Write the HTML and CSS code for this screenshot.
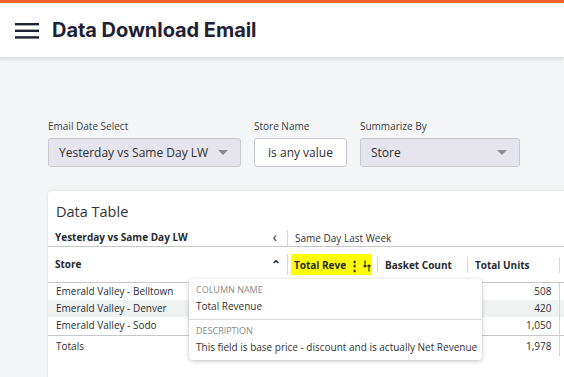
FILE: index.html
```html
<!DOCTYPE html>
<html>
<head>
	<title>Data Download Email</title>
	<meta name="viewport" content="width=device-width, initial-scale=1">
	<link rel="stylesheet" href="styles.css">
</head>

<body>
	<div class="topbar"></div>
	<header class="appbar">
		<svg class="menu" width="24" height="16" viewBox="0 0 24 16">
			<rect x="0" y="0" width="24" height="2.4" fill="#1e2235"/>
			<rect x="0" y="6.6" width="24" height="2.4" fill="#1e2235"/>
			<rect x="0" y="13.2" width="24" height="2.4" fill="#1e2235"/>
		</svg>
		<h1>Data Download Email</h1>
	</header>

	<main class="page">
		<!-- Filters -->
		<div class="filters">
			<div class="filter">
				<label>Email Date Select</label>
				<div class="select date">Yesterday vs Same Day LW <span class="caret"></span></div>
			</div>
			<div class="filter">
				<label>Store Name</label>
				<div class="input">is any value</div>
			</div>
			<div class="filter">
				<label>Summarize By</label>
				<div class="select summary">Store <span class="caret"></span></div>
			</div>
		</div>

		<!-- Data table card -->
		<div class="card">
			<h2>Data Table</h2>
			<table class="grid">
				<colgroup>
					<col style="width:239px">
					<col style="width:90px">
					<col style="width:90px">
					<col style="width:92px">
					<col style="width:100px">
				</colgroup>
				<tr class="group">
					<th><div class="split"><span>Yesterday vs Same Day LW</span><span class="chev">&lsaquo;</span></div></th>
					<th colspan="4"><div class="sep light">Same Day Last Week</div></th>
				</tr>
				<tr class="head">
					<th><div class="split"><span>Store</span><span class="up">&#8963;</span></div></th>
					<th><div class="sep"><div class="hl">
						<span>Total Reve</span>
						<span class="dots">&#8942;</span>
						<svg class="sort" width="8" height="12" viewBox="0 0 8 12">
							<path d="M2 0.5 V7 M0.5 5.5 L2 7 L3.5 5.5" stroke="#222" stroke-width="1.1" fill="none"/>
							<path d="M6 11.5 V5 M4.5 6.5 L6 5 L7.5 6.5" stroke="#222" stroke-width="1.1" fill="none"/>
						</svg>
					</div></div></th>
					<th><div class="sep">Basket Count</div></th>
					<th><div class="sep">Total Units</div></th>
					<th><div class="sep">&nbsp;</div></th>
				</tr>
				<tr class="row">
					<td>Emerald Valley - Belltown</td><td></td><td></td><td class="num">508</td><td class="edge"></td>
				</tr>
				<tr class="row alt">
					<td>Emerald Valley - Denver</td><td></td><td></td><td class="num">420</td><td class="edge"></td>
				</tr>
				<tr class="row last">
					<td>Emerald Valley - Sodo</td><td></td><td></td><td class="num">1,050</td><td class="edge"></td>
				</tr>
				<tr class="row totals">
					<td>Totals</td><td></td><td></td><td class="num">1,978</td><td class="edge"></td>
				</tr>
			</table>

			<!-- Column info popup -->
			<div class="tooltip">
				<div class="tip-part">
					<div class="tip-label">Column Name</div>
					<div class="tip-text">Total Revenue</div>
				</div>
				<div class="tip-part">
					<div class="tip-label">Description</div>
					<div class="tip-text">This field is base price - discount and is actually Net Revenue</div>
				</div>
			</div>
		</div>
	</main>
</body>
</html>
```

FILE: styles.css
```css
body {
  margin: 0;
  width: 564px;
  height: 377px;
  overflow: hidden;
  background-color: #f4f5f7;
  font-family: "Open Sans", "Noto Sans", sans-serif;
  color: #262a30;
}

/* Top strip and app bar */
.topbar {
  height: 3px;
  background-color: #f4632a;
}

.appbar {
  height: 54px;
  background-color: #fff;
  display: flex;
  align-items: center;
  padding-left: 15px;
  box-shadow: 0 2px 4px rgba(0,0,0,0.12);
  position: relative;
}

.menu {
  margin-right: 13px;
  margin-top: 1px;
}

.appbar h1 {
  margin: 0;
  font-family: "Inter", sans-serif;
  font-weight: 700;
  font-size: 20px;
  color: #1e2235;
  letter-spacing: -0.05px;
}

/* Page content */
.page {
  padding: 62px 0 0 48px;
}

.filters {
  display: flex;
  gap: 13px;
}

.filter label {
  display: block;
  font-size: 10px;
  color: #3a3d42;
  margin-bottom: 5px;
  line-height: 14px;
}

.select, .input {
  height: 27px;
  border: 1px solid #c9c8cf;
  border-radius: 3px;
  font-size: 12px;
  line-height: 27px;
  display: flex;
  align-items: center;
  color: #2b2e33;
  white-space: nowrap;
}

.select {
  background-color: #e6e4ec;
  padding-left: 10px;
  box-sizing: content-box;
}

.select.date {
  width: 181px;
}

.select.summary {
  width: 148px;
}

.input {
  background-color: #fff;
  width: 91px;
  justify-content: center;
}

.caret {
  margin-left: auto;
  margin-right: 12px;
  width: 0;
  height: 0;
  border-left: 5px solid transparent;
  border-right: 5px solid transparent;
  border-top: 5px solid #8a8a92;
}

/* Card */
.card {
  position: relative;
  margin-top: 24px;
  width: 620px;
  height: 200px;
  background-color: #fff;
  border-radius: 4px 0 0 0;
  box-shadow: 0 0 3px rgba(0,0,0,0.12);
}

.card h2 {
  margin: 0;
  padding: 11px 0 0 8px;
  font-size: 14.5px;
  font-weight: 400;
  color: #333;
  line-height: 20px;
}

.grid {
  border-collapse: collapse;
  table-layout: fixed;
  margin-top: 8px;
  font-size: 10px;
}

.grid th {
  text-align: left;
  font-weight: 700;
  padding: 0;
}

.group th {
  height: 16px;
  border-bottom: 1px solid #c8c8c8;
  vertical-align: top;
}

.split {
  display: flex;
  justify-content: space-between;
  padding: 0 10px 0 7px;
  line-height: 15px;
}

.chev {
  font-weight: 400;
  font-size: 14px;
  line-height: 13px;
}

.up {
  font-size: 12px;
}

.sep {
  border-left: 1px solid #d6d6d6;
  padding-left: 7px;
  line-height: 16px;
}

.sep.light {
  font-weight: 400;
  color: #333;
}

.head th {
  height: 35px;
  border-bottom: 1px solid #c8c8c8;
}

.head .split {
  line-height: 17px;
  padding-right: 6px;
}

.head .sep {
  padding-left: 3px;
}

.head th:nth-child(n+3) .sep {
  padding-left: 7px;
}

.hl {
  background-color: #ffff00;
  width: 78px;
  height: 21px;
  padding-left: 3px;
  display: flex;
  align-items: center;
  white-space: nowrap;
  overflow: hidden;
}

.dots {
  font-size: 13px;
  width: 6px;
  text-align: center;
  margin-left: 2px;
}

.sort {
  flex-shrink: 0;
  margin-left: auto;
  margin-right: 1px;
  margin-top: 3px;
}

.row td {
  height: 17px;
  padding: 0 0 0 8px;
  line-height: 17px;
  color: #2b2e33;
  white-space: nowrap;
}

.row.alt td {
  background-color: #f0f1f1;
}

.row.last td {
  border-bottom: 1px solid #c8c8c8;
  padding-bottom: 1px;
}

.row.totals td {
  height: 19px;
  padding-top: 1px;
}

.row td.num {
  text-align: right;
  padding-right: 7px;
}

.row td.edge {
  border-left: 1px solid #d6d6d6;
}

/* Popup with column info */
.tooltip {
  position: absolute;
  left: 141px;
  top: 88px;
  width: 293px;
  background-color: #fff;
  border-radius: 4px;
  box-shadow: 0 1px 4px rgba(0,0,0,0.25);
}

.tip-part {
  padding: 4px 7px 4px 7px;
}

.tip-part + .tip-part {
  border-top: 1px solid #ddd;
}

.tip-label {
  font-size: 9px;
  text-transform: uppercase;
  color: #8a8a8a;
  line-height: 14px;
}

.tip-text {
  font-size: 10px;
  color: #333;
  line-height: 18px;
  white-space: nowrap;
}
```
